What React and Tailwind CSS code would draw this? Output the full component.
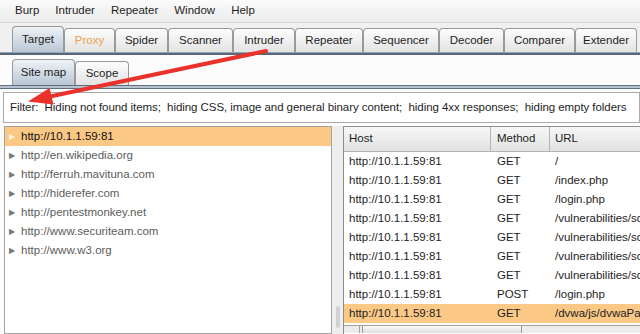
import React from 'react';

const menus = ['Burp', 'Intruder', 'Repeater', 'Window', 'Help'];

const tabs = [
  ['Target', 52],
  ['Proxy', 51],
  ['Spider', 53],
  ['Scanner', 65],
  ['Intruder', 62],
  ['Repeater', 68],
  ['Sequencer', 76],
  ['Decoder', 65],
  ['Comparer', 71],
  ['Extender', 62],
];

const sites = [
  'http://10.1.1.59:81',
  'http://en.wikipedia.org',
  'http://ferruh.mavituna.com',
  'http://hiderefer.com',
  'http://pentestmonkey.net',
  'http://www.securiteam.com',
  'http://www.w3.org',
];

const requests = [
  ['GET', '/'],
  ['GET', '/index.php'],
  ['GET', '/login.php'],
  ['GET', '/vulnerabilities/sqli/'],
  ['GET', '/vulnerabilities/sqli_blind/'],
  ['GET', '/vulnerabilities/sqli/?id=1'],
  ['GET', '/vulnerabilities/sqli/?id=2'],
  ['POST', '/login.php'],
  ['GET', '/dvwa/js/dvwaPage.js'],
];

function Tab({ label, width, selected, orange }) {
  return (
    <div
      style={{ width }}
      className={
        'shrink-0 flex items-center justify-center rounded-t-[4px] border border-b-0 border-[#9a9a9a] ' +
        (selected
          ? 'h-[26px] bg-gradient-to-b from-[#eef3f7] to-[#b9c7d4]'
          : 'h-[24px] bg-gradient-to-b from-[#fdfdfd] to-[#e3e3e3]') +
        (orange ? ' text-[#e8a04c]' : ' text-[#1e1e1e]')
      }
    >
      {label}
    </div>
  );
}

export default function App() {
  return (
    <div className="relative w-[640px] h-[334px] overflow-hidden bg-[#f0f0f0] font-['Liberation_Sans',Arial,sans-serif] text-[11.5px] leading-none text-[#1e1e1e]">
      {/* menu bar */}
      <div className="flex h-[23px] items-center gap-[16px] pl-[15px] bg-gradient-to-b from-[#fbfbfb] to-[#ebebeb] border-b border-[#d6d6d6]">
        {menus.map((m) => (
          <span key={m}>{m}</span>
        ))}
      </div>

      {/* main tabs */}
      <div className="flex items-end h-[29px] pl-[12px]">
        {tabs.map(([label, w], i) => (
          <Tab key={label} label={label} width={w} selected={i === 0} orange={label === 'Proxy'} />
        ))}
      </div>
      <div className="h-[3px] border-t border-[#96a3b0] bg-[#56687a]" />

      {/* target panel */}
      <div className="bg-[#fcfcfc] h-[279px] flex flex-col">
        <div className="flex items-end h-[30px] pl-[12px]">
          <Tab label="Site map" width={63} selected />
          <Tab label="Scope" width={54} />
        </div>
        <div className="h-[4px] border-y border-[#5d6f81] bg-[#b7c4d0]" />

        <div className="mt-[3px] ml-[3px] h-[31px] flex items-center pl-[6px] border border-[#a9a9a9] bg-white whitespace-pre tracking-[-0.06px]">
          Filter:  Hiding not found items;  hiding CSS, image and general binary content;  hiding 4xx responses;  hiding empty folders
        </div>

        <div className="flex flex-1 mt-[3px] min-h-0">
          {/* site tree */}
          <div className="shrink-0 ml-[4px] w-[328px] border border-[#a3a3a3] bg-white">
            {sites.map((s, i) => (
              <div
                key={s}
                className={
                  'flex items-center h-[19px] pl-[4px] ' +
                  (i === 0 ? 'bg-[#fbc886] text-[#111]' : 'text-[#5c5c5c]')
                }
              >
                <span className={'w-[10px] text-[8px] ' + (i === 0 ? 'text-[#fff3df]' : 'text-[#777]')}>▶</span>
                <span className="ml-[2px]">{s}</span>
              </div>
            ))}
          </div>

          {/* splitter */}
          <div className="shrink-0 w-[11px] bg-[#eeeeee] flex flex-col justify-end items-center pb-[6px]">
            <div className="w-[4px] h-[22px] rounded-[2px] bg-[#d2d2d2]" />
          </div>

          {/* request table */}
          <div className="flex-1 min-w-0 border-l border-t border-[#8f8f8f] bg-white flex flex-col overflow-hidden">
            <div className="flex shrink-0 h-[25px] bg-gradient-to-b from-[#f7f7f7] to-[#e1e1e1] border-b border-[#b4b4b4]">
              <div className="shrink-0 w-[147px] pl-[5px] flex items-center border-r border-[#b4b4b4]">Host</div>
              <div className="shrink-0 w-[59px] pl-[6px] flex items-center border-r border-[#b4b4b4]">Method</div>
              <div className="w-[200px] shrink-0 pl-[5px] flex items-center">URL</div>
            </div>
            {requests.map(([m, u], i) => (
              <div
                key={i}
                className={'flex shrink-0 h-[19px] items-center ' + (i === 8 ? 'bg-[#fbc886]' : '')}
              >
                <div className="shrink-0 w-[147px] pl-[5px]">http://10.1.1.59:81</div>
                <div className="shrink-0 w-[59px] pl-[6px]">{m}</div>
                <div className="shrink-0 w-[200px] pl-[5px] whitespace-nowrap">{u}</div>
              </div>
            ))}
            <div className="mt-[2px] flex shrink-0 h-[8px] border-t border-[#a0a0a0] bg-[#ececec]">
              <div className="w-[16px] border-r border-[#a0a0a0]" />
              <div className="ml-[2px] w-[160px] border-x border-[#9a9a9a] bg-gradient-to-b from-[#fafafa] to-[#dedede]" />
            </div>
          </div>
        </div>
      </div>

      {/* red annotation arrow */}
      <svg className="absolute left-0 top-0 pointer-events-none" width="640" height="334">
        <line x1="266" y1="51" x2="50" y2="96.5" stroke="#e8322b" strokeWidth="4" strokeLinecap="round" />
        <polygon points="28,101.5 53.5,104.5 49.5,88" fill="#e8322b" />
      </svg>
    </div>
  );
}
